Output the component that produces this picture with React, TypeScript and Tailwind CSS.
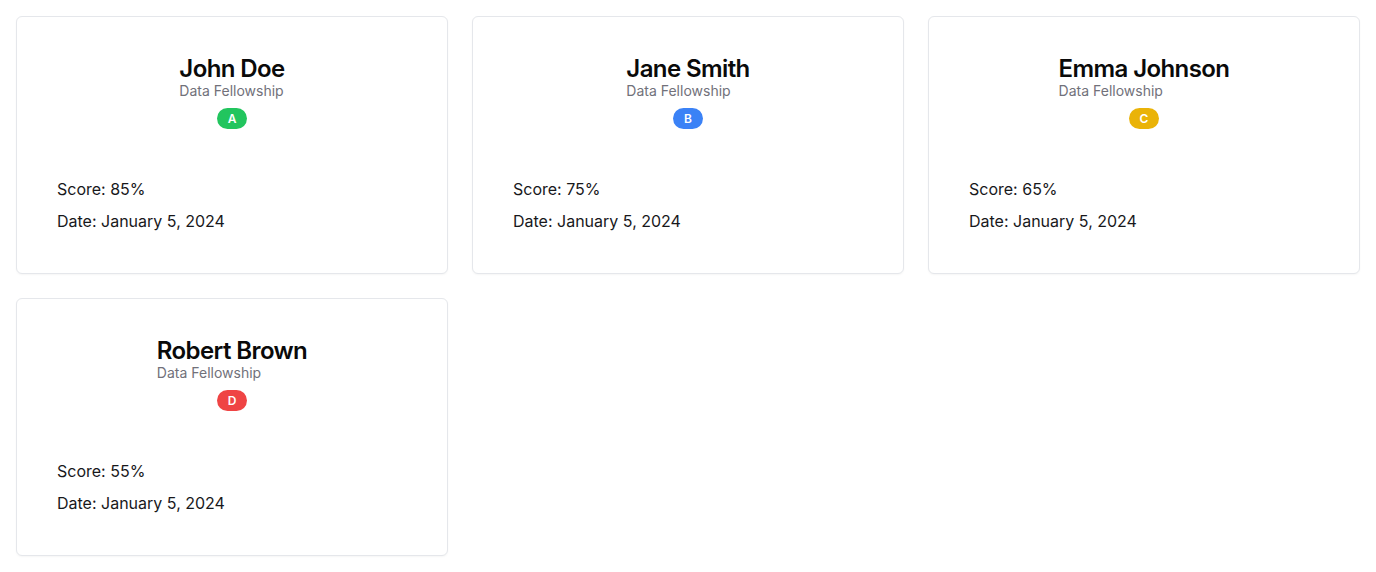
const results = [
  { id: 1, name: 'John Doe', program: 'Data Fellowship', grade: 'A', badge: 'bg-[#22c55e]', score: 85, date: 'January 5, 2024' },
  { id: 2, name: 'Jane Smith', program: 'Data Fellowship', grade: 'B', badge: 'bg-[#3b82f6]', score: 75, date: 'January 5, 2024' },
  { id: 3, name: 'Emma Johnson', program: 'Data Fellowship', grade: 'C', badge: 'bg-[#eab308]', score: 65, date: 'January 5, 2024' },
  { id: 4, name: 'Robert Brown', program: 'Data Fellowship', grade: 'D', badge: 'bg-[#ef4444]', score: 55, date: 'January 5, 2024' },
]

function ResultCard({ r }: { r: typeof results[0] }) {
  return (
    <div className="rounded-md border border-[#e5e7eb] bg-white p-10 shadow-[0_1px_2px_rgba(0,0,0,0.04)]">
      {/* Header */}
      <div className="flex flex-col items-center">
        <div>
          <h3 className="text-2xl leading-none font-semibold tracking-tight text-[#0a0a0a]">{r.name}</h3>
          <p className="text-sm leading-5 text-[#71717a]">{r.program}</p>
        </div>
        <span className={`mt-[7px] inline-flex h-[21px] items-center rounded-full px-[11px] text-xs font-semibold text-white ${r.badge}`}>
          {r.grade}
        </span>
      </div>

      {/* Details */}
      <div className="mt-[48px] space-y-2 text-base leading-6 text-[#18181b]">
        <p>Score: {r.score}%</p>
        <p>Date: {r.date}</p>
      </div>
    </div>
  )
}

export default function App() {
  return (
    <div className="min-h-screen bg-white font-['Inter',sans-serif]">
      <div className="grid grid-cols-3 gap-6 p-4">
        {results.map((r) => (
          <ResultCard key={r.id} r={r} />
        ))}
      </div>
    </div>
  )
}
